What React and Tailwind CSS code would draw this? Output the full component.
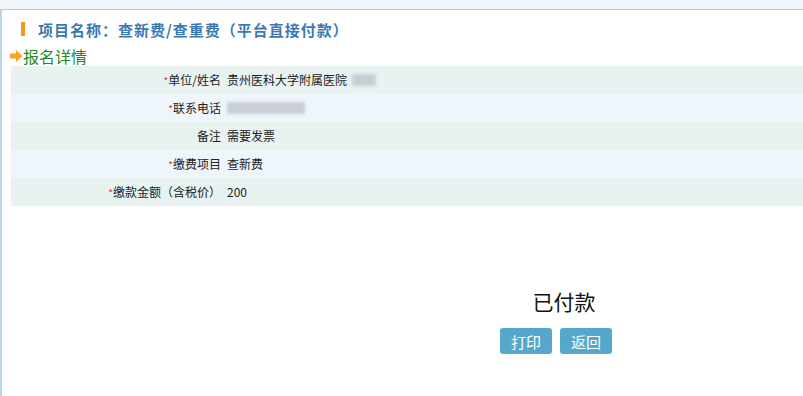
export default function App() {
  const rows = [
    { req: true, label: "单位/姓名", value: "贵州医科大学附属医院", blur: 24, bg: "bg-[#e8f2f0]" },
    { req: true, label: "联系电话", value: "", blur: 78, bg: "bg-[#eef5fb]" },
    { req: false, label: "备注", value: "需要发票", bg: "bg-[#e8f2f0]" },
    { req: true, label: "缴费项目", value: "查新费", bg: "bg-[#eef5fb]" },
    { req: true, label: "缴款金额（含税价）", value: "200", bg: "bg-[#e8f2f0]" },
  ];
  return (
    <div className="w-[803px] h-[396px] bg-white overflow-hidden" style={{ fontFamily: '"Noto Sans CJK SC", "Noto Sans", sans-serif' }}>
      <div className="h-[10px] bg-[#eef6fc] border-b border-[#a9d0dd]"></div>
      <div className="h-[386px] border-l-2 border-[#b5d6e2] flex flex-col">
        <div className="flex items-center h-[36px] pl-[19px] pt-[2px]">
          <div className="w-[4px] h-[14px] bg-[#f39a12]"></div>
          <div className="ml-[13px] text-[15px] font-bold text-[#3b79b3] leading-none tracking-[1px]">项目名称：查新费/查重费（平台直接付款）</div>
        </div>
        <div className="flex items-center h-[20px] pl-[8px]">
          <svg width="13" height="12" viewBox="0 0 13 12">
            <path d="M0 3.5 H6 V0 L12.5 6 L6 12 V8.5 H0 Z" fill="#f5a623" />
          </svg>
          <span className="text-[16px] text-[#1e8a1e] leading-none">报名详情</span>
        </div>
        <div className="ml-[9px] flex flex-col">
          {rows.map((r, i) => (
            <div key={i} className={`flex items-center h-[28px] text-[12px] text-[#222] ${r.bg}`}>
              <div className="w-[210px] text-right">
                {r.req && <span className="text-[#e03030] text-[10px]">*</span>}
                {r.label}
              </div>
              <div className="ml-[6px] flex items-center">
                {r.value && <span>{r.value}</span>}
                {r.blur && (
                  <span className={`inline-block h-[12px] ${r.value ? "ml-[5px] w-[24px]" : "w-[78px]"} bg-[#c9ced6] blur-[1.5px]`}></span>
                )}
              </div>
            </div>
          ))}
        </div>
        <div className="flex flex-col items-center pl-[307px] mt-[85px]">
          <div className="ml-[16px] text-[21px] text-[#111] leading-none">已付款</div>
          <div className="flex gap-[8px] mt-[16px]">
            <button className="w-[52px] h-[26px] rounded-[3px] bg-[#56a8cb] text-white text-[15px] leading-none">打印</button>
            <button className="w-[52px] h-[26px] rounded-[3px] bg-[#56a8cb] text-white text-[15px] leading-none">返回</button>
          </div>
        </div>
      </div>
    </div>
  );
}
